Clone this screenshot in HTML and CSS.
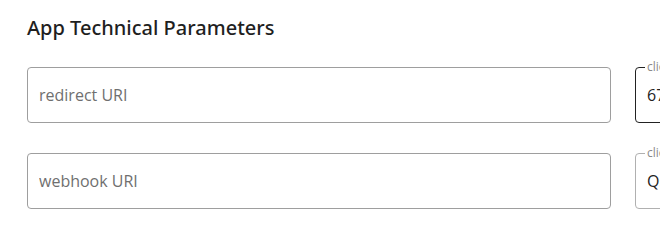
FILE: index.html
```html
<!DOCTYPE html>
<html>
<head>
<meta charset="utf-8">
<link rel="stylesheet" href="styles.css">
</head>
<body>
<div class="page">
  <h2 class="title">App Technical Parameters</h2>
  <div class="grid">
    <div class="field"><input class="input" type="text" placeholder="redirect URI"></div>
    <fieldset class="outlined active">
      <legend class="legend">client ID</legend>
      <div class="value">67a3f1c2d9e84b5f</div>
    </fieldset>
    <div class="field"><input class="input" type="text" placeholder="webhook URI"></div>
    <fieldset class="outlined">
      <legend class="legend">client secret</legend>
      <div class="value">Qs8vK2pLm9xTz4Wd</div>
    </fieldset>
  </div>
</div>
</body>
</html>
```
FILE: styles.css
```css
html, body {
  margin: 0;
  padding: 0;
  background: #fff;
  overflow: hidden;
}
.page {
  padding: 13px 0 0 27px;
  width: 1300px;
}
.title {
  margin: 0 0 24px 0;
  font-family: "Noto Sans", sans-serif;
  font-weight: 500;
  font-size: 20px;
  line-height: 30px;
  color: #1f1f1f;
  letter-spacing: 0;
}
.grid {
  display: grid;
  grid-template-columns: 584px 584px;
  column-gap: 24px;
  row-gap: 30px;
}
.field {
  height: 56px;
}
.input {
  box-sizing: border-box;
  width: 584px;
  height: 56px;
  border: 1px solid #9e9e9e;
  border-radius: 4px;
  padding: 0 11px;
  font-family: "Open Sans", sans-serif;
  font-size: 16px;
  color: #222;
  outline: none;
}
.input::placeholder {
  color: #6f6f6f;
}
.outlined {
  box-sizing: border-box;
  margin: -6px 0 0 0;
  height: 62px;
  border: 1px solid #b0b0b0;
  border-radius: 4px;
  padding: 0 11px;
  min-width: 0;
}
.outlined.active {
  border-color: #222;
}
.legend {
  font-family: "Open Sans", sans-serif;
  font-size: 12px;
  line-height: 12px;
  color: #8a8a8a;
  padding: 0 2px;
  margin-left: -2px;
}
.value {
  font-family: "Open Sans", sans-serif;
  font-size: 16px;
  line-height: 22px;
  color: #222;
  padding-top: 11px;
  white-space: nowrap;
}
```
